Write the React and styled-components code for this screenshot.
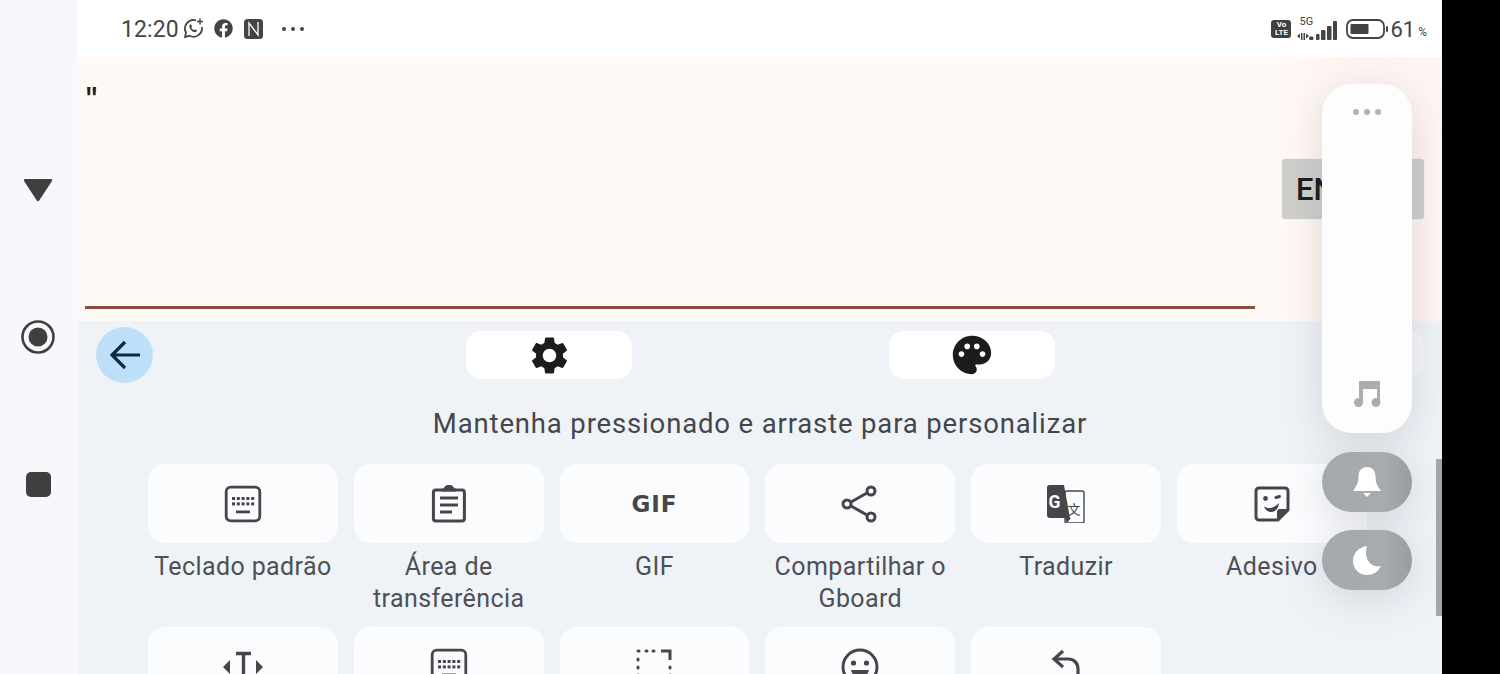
import React from "react";
import styled, { createGlobalStyle } from "styled-components";
import { MdSettings, MdPalette } from "react-icons/md";
import { FaFacebook } from "react-icons/fa";

const Global = createGlobalStyle`
  html, body { margin: 0; padding: 0; background: #000; }
  * { box-sizing: border-box; }
`;

const Screen = styled.div`
  position: relative;
  width: 1500px;
  height: 674px;
  display: grid;
  grid-template-columns: 78px 1364px 58px;
  overflow: hidden;
  font-family: Roboto, "Noto Sans", sans-serif;
  background: #000;
`;

const NavBar = styled.nav`
  background: #f6f8fb;
  display: flex;
  flex-direction: column;
  align-items: center;
  padding: 173px 2px 0 0;
  gap: 113px;
`;
const NavSlot = styled.div`
  width: 34px;
  height: 34px;
  display: flex;
  align-items: center;
  justify-content: center;
`;

const Main = styled.main`
  position: relative;
  display: flex;
  flex-direction: column;
  height: 674px;
  overflow: hidden;
  background: #eff3f8;
`;

const StatusBar = styled.header`
  height: 57px;
  flex: none;
  background: #fff;
  display: flex;
  align-items: center;
  justify-content: space-between;
  padding: 0 15px 0 43px;
  color: #444;
`;
const StatusGroup = styled.div`
  display: flex;
  align-items: center;
`;
const Clock = styled.span`
  font-size: 23px;
  letter-spacing: 0.1px;
  margin: 2px 4px 0 0;
`;
const Percent = styled.span`
  font-size: 22px;
  margin: 1px 0 0 2px;
`;
const PercentSign = styled.span`
  font-size: 12px;
  margin: 6px 0 0 3px;
`;
const VoLte = styled.span`
  width: 20px;
  height: 18px;
  border-radius: 3px;
  background: #404040;
  color: #fff;
  font-size: 8px;
  line-height: 8px;
  font-weight: 700;
  text-align: center;
  padding-top: 1px;
  margin-right: 6px;
`;
const Signal = styled.div`
  position: relative;
  width: 40px;
  height: 24px;
  margin-right: 9px;
`;
const FiveG = styled.span`
  position: absolute;
  left: 2px;
  top: -1px;
  font-size: 11px;
  line-height: 12px;
  color: #444;
`;

const Editor = styled.section`
  height: 264px;
  flex: none;
  display: flex;
  padding: 0 0 12px 7px;
  background: linear-gradient(90deg, #fff9f5 0%, #fff9f5 88%, #fff5f2 94%, #fff5f2 100%);
`;
const EditorField = styled.div`
  width: 1170px;
  flex: none;
  display: flex;
  flex-direction: column;
  justify-content: space-between;
  border-bottom: 3px solid #8a4f42;
`;
const Quote = styled.span`
  font-family: "Liberation Mono", monospace;
  font-weight: 700;
  font-size: 25px;
  line-height: 28px;
  color: #222;
  margin-top: 29px;
  margin-left: -1px;
`;
const EnterButton = styled.button`
  flex: none;
  width: 142px;
  height: 60px;
  margin: 102px 0 0 27px;
  padding: 0 0 0 14px;
  text-align: left;
  border: none;
  border-radius: 3px;
  background: #cfcfcd;
  box-shadow: 0 0 2px rgba(0, 0, 0, 0.1);
  color: #1c1c1c;
  font-family: Roboto, sans-serif;
  font-size: 31px;
  font-weight: 500;
`;

const Keyboard = styled.section`
  position: relative;
  flex: 1;
  min-height: 0;
  overflow: hidden;
  background: #eff3f8;
`;
const Toolbar = styled.div`
  height: 56px;
  margin-top: 6px;
  padding-left: 18px;
  display: flex;
  align-items: center;
`;
const BackButton = styled.div`
  width: 57px;
  height: 56px;
  flex: none;
  border-radius: 50%;
  background: #bde0f8;
  display: flex;
  align-items: center;
  justify-content: center;
  margin-right: 313px;
`;
const ToolPill = styled.div`
  width: ${(p) => p.$w}px;
  height: 48px;
  flex: none;
  margin-right: ${(p) => p.$after || 0}px;
  border-radius: 15px;
  background: ${(p) => p.$bg || "#fff"};
  color: #1c1c1c;
  display: flex;
  align-items: center;
  justify-content: center;
`;
const Hint = styled.h2`
  margin: 25px 0 24px;
  font-size: 27.5px;
  line-height: 32px;
  font-weight: 400;
  letter-spacing: 0.85px;
  text-align: center;
  color: #44474a;
`;
const TileGrid = styled.div`
  display: grid;
  grid-template-columns: repeat(6, 189.8px);
  column-gap: 16px;
  row-gap: 12px;
  padding-left: 70px;
`;
const TileCell = styled.div`
  display: flex;
  flex-direction: column;
  align-items: center;
`;
const Tile = styled.div`
  width: 100%;
  height: 79px;
  border-radius: 17px;
  background: #fbfcfe;
  color: #444649;
  display: flex;
  align-items: center;
  justify-content: center;
`;
const Label = styled.div`
  margin-top: 8px;
  min-height: 64px;
  font-size: 25px;
  line-height: 32px;
  letter-spacing: 0.4px;
  color: #4d5154;
  text-align: center;
  white-space: nowrap;
`;
const GifMark = styled.span`
  font-family: "DejaVu Sans", sans-serif;
  font-weight: 700;
  font-size: 23px;
  letter-spacing: 1px;
  color: #444649;
`;

const Scrollbar = styled.div`
  position: absolute;
  right: 0;
  top: 459px;
  width: 6px;
  height: 157px;
  background: #a5a6a8;
`;

const Dock = styled.aside`
  position: absolute;
  left: 1322px;
  top: 84px;
  width: 90px;
  display: flex;
  flex-direction: column;
  gap: 18px;
  filter: drop-shadow(0 8px 20px rgba(60, 65, 75, 0.17));
`;
const DockPanel = styled.div`
  height: 349px;
  margin-bottom: 1px;
  border-radius: 30px;
  background: #fdfdfd;
  display: flex;
  flex-direction: column;
  align-items: center;
  justify-content: space-between;
  padding: 25px 0 26px;
`;
const Dots = styled.div`
  display: flex;
  gap: ${(p) => p.$gap || 5}px;
`;
const Dot = styled.span`
  width: 6px;
  height: 6px;
  border-radius: 50%;
  background: #b3b3b3;
`;
const StatusDot = styled.span`
  width: 4px;
  height: 4px;
  border-radius: 50%;
  background: #444;
`;
const DockPill = styled.div`
  height: 60px;
  border-radius: 30px;
  background: linear-gradient(90deg, #a5a9ae 0%, #a7abb0 70%, #999da2 100%);
  display: flex;
  align-items: center;
  justify-content: center;
`;

const Sv = styled.svg`
  display: block;
  flex: none;
  margin: ${(p) => p.$m || "0"};
`;

const KeyboardIcon = () => (
  <Sv width="38" height="38" viewBox="0 0 38 38" fill="none">
    <rect x="2.2" y="2.2" width="33.6" height="33.6" rx="4.500" stroke="currentColor" strokeWidth="2.800" />
    <g fill="currentColor">
      {[8, 12.8, 17.6, 22.4, 27.2].map((x) => <rect key={x} x={x} y="12" width="3" height="3" />)}
      {[8, 12.8, 17.6, 22.4, 27.2].map((x) => <rect key={x} x={x} y="17.4" width="3" height="3" />)}
      <rect x="12" y="25.500" width="14" height="2.800" />
    </g>
  </Sv>
);
const ClipboardIcon = () => (
  <Sv width="38" height="38" viewBox="0 0 38 38" fill="none" stroke="currentColor" strokeWidth="3">
    <rect x="3.400" y="5" width="31" height="31" rx="2.500" />
    <path d="M12 5h14M15 5c0-5 8-5 8 0" fill="currentColor" />
    <path d="M10 13h18M10 20h18M10 27h12" />
  </Sv>
);
const ShareIcon = () => (
  <Sv width="38" height="38" viewBox="0 0 38 38" fill="none" stroke="currentColor" strokeWidth="3">
    <circle cx="6" cy="19" r="4" />
    <circle cx="30" cy="6" r="4" />
    <circle cx="30" cy="32" r="4" />
    <path d="M9.600 17.200 26.400 7.800M9.600 20.800l16.800 9.400" />
  </Sv>
);
const TranslateIcon = () => (
  <Sv width="38" height="38" viewBox="0 0 38 38">
    <rect x="18" y="6" width="19" height="32" rx="2" fill="none" stroke="#444649" strokeWidth="1.400" />
    <path d="M2.500 0H17l6 33H3a3 3 0 0 1-3-3V2.500A2.500 2.500 0 0 1 2.500 0z" fill="#444649" />
    <path d="M18 33l2 5 4-5z" fill="#444649" />
    <text x="1.500" y="23" fontFamily="Roboto, sans-serif" fontSize="17.500" fontWeight="700" fill="#fbfcfe">G</text>
    <text x="20.500" y="29" fontFamily="'Noto Sans CJK SC', sans-serif" fontSize="13" fill="#444649">文</text>
  </Sv>
);
const StickerIcon = () => (
  <Sv width="36" height="36" viewBox="0 0 36 36" fill="none">
    <path d="M5 2h26a3 3 0 0 1 3 3v19L24 34H5a3 3 0 0 1-3-3V5a3 3 0 0 1 3-3z" stroke="currentColor" strokeWidth="3" strokeLinejoin="round" />
    <path d="M34 23h-8a3 3 0 0 0-3 3v8z" fill="currentColor" />
    <circle cx="11.500" cy="12.500" r="2.400" fill="currentColor" />
    <path d="M22 11.500l3.500-1" stroke="currentColor" strokeWidth="3" strokeLinecap="round" />
    <path d="M10 20c4 3.500 10 2.500 15-3-.6 6-4 9-8 9-3 0-6-2-7-6z" fill="currentColor" />
  </Sv>
);
const TextWidthIcon = () => (
  <Sv width="42" height="38" viewBox="0 0 42 38" fill="none">
    <path d="M14 5.500h15M21.500 5.500V38" stroke="currentColor" strokeWidth="3.400" />
    <path d="M8 12v14l-7-7zM34 12v14l7-7z" fill="currentColor" />
  </Sv>
);
const SelectIcon = () => (
  <Sv width="36" height="38" viewBox="0 0 36 38" fill="none" stroke="currentColor" strokeWidth="3">
    <path d="M2 3h1M10 3h1M17 3h1M2 11v1M2 19v1M2 27v1M2 35v1M34 19v1M34 27v1M34 35v1" strokeLinecap="round" />
    <path d="M25 3h9v9" />
  </Sv>
);
const FaceIcon = () => (
  <Sv width="38" height="38" viewBox="0 0 38 38" fill="none">
    <circle cx="19" cy="19" r="17" stroke="currentColor" strokeWidth="3" />
    <circle cx="12.500" cy="15" r="2.600" fill="currentColor" />
    <circle cx="25.500" cy="15" r="2.600" fill="currentColor" />
    <path d="M10 22h18c-1 5-5 8-9 8s-8-3-9-8z" fill="currentColor" />
  </Sv>
);
const UndoIcon = () => (
  <Sv width="30" height="38" viewBox="0 0 30 38" fill="none" stroke="currentColor" strokeWidth="3.200">
    <path d="M12 3 3 11l9 8" />
    <path d="M3 11h14c6 0 10 4 10 10v17" />
  </Sv>
);

const tiles = [
  { key: "teclado", label: "Teclado padrão", icon: <KeyboardIcon /> },
  { key: "area", label: <>Área de<br />transferência</>, icon: <ClipboardIcon /> },
  { key: "gif", label: "GIF", icon: <GifMark>GIF</GifMark> },
  { key: "share", label: <>Compartilhar o<br />Gboard</>, icon: <ShareIcon /> },
  { key: "trad", label: "Traduzir", icon: <TranslateIcon /> },
  { key: "ades", label: "Adesivo", icon: <StickerIcon /> },
  { key: "width", icon: <TextWidthIcon /> },
  { key: "kb2", icon: <KeyboardIcon /> },
  { key: "sel", icon: <SelectIcon /> },
  { key: "face", icon: <FaceIcon /> },
  { key: "undo", icon: <UndoIcon /> },
];

export default function App() {
  return (
    <Screen>
      <Global />
      <NavBar>
        <NavSlot>
          <Sv width="30" height="24" viewBox="0 0 30 24"><path d="M2 1h26a1.300 1.300 0 0 1 1 2L16.200 22.500a1.400 1.400 0 0 1-2.400 0L1 3a1.300 1.300 0 0 1 1-2z" fill="#3f3f3f" /></Sv>
        </NavSlot>
        <NavSlot>
          <Sv width="34" height="34" viewBox="0 0 34 34"><circle cx="17" cy="17" r="15.500" fill="none" stroke="#3f3f3f" strokeWidth="2.600" /><circle cx="17" cy="17" r="9.500" fill="#3f3f3f" /></Sv>
        </NavSlot>
        <NavSlot>
          <Sv width="25" height="25" viewBox="0 0 25 25"><rect width="25" height="25" rx="5" fill="#3f3f3f" /></Sv>
        </NavSlot>
      </NavBar>

      <Main>
        <StatusBar>
          <StatusGroup>
            <Clock>12:20</Clock>
            <Sv width="21" height="21" viewBox="0 0 21 21" fill="none" $m="0 10px 0 0">
              <path d="M13 2.300A8.600 8.600 0 0 0 3 14.600L2 19l4.500-1.200A8.600 8.600 0 0 0 18.900 9" stroke="#444" strokeWidth="1.800" />
              <path d="M7 6.500c-1.400 1.500-.6 3.600 1 5.500 1.800 2 4 3 5.600 1.600l.5-1-2.200-1.300-1 .9c-1-.4-2.200-1.600-2.700-2.700l.9-1L8 6.200z" fill="#444" />
              <path d="M17 0.500v6M14 3.500h6" stroke="#444" strokeWidth="1.500" />
            </Sv>
            <FaFacebook size={19} color="#444" style={{ marginRight: 11 }} />
            <Sv width="19" height="20" viewBox="0 0 19 20" $m="0 19px 0 0">
              <rect width="19" height="20" rx="3.500" fill="#444" />
              <path d="M5 17V4l9 12V3" fill="none" stroke="#fff" strokeWidth="1.300" />
            </Sv>
            <Dots $gap={5}>
              <StatusDot /><StatusDot /><StatusDot />
            </Dots>
          </StatusGroup>
          <StatusGroup>
            <VoLte>Vo<br />LTE</VoLte>
            <Signal>
              <FiveG>5G</FiveG>
              <Sv width="40" height="24" viewBox="0 0 40 24" fill="#444">
                <path d="M0 19l3-2.500v5zM4 16h1.500v7H4zM6.500 16H8v7H6.500zM9 16.500l3 2.500-3 2.500z" />
                <rect x="12" y="19.500" width="4.500" height="3.500" rx="1.500" />
                <rect x="19" y="17" width="3.500" height="6" rx="1" />
                <rect x="24" y="13" width="4.500" height="10" rx="1" />
                <rect x="30" y="9" width="4.500" height="14" rx="1" />
                <rect x="36" y="4" width="4" height="19" rx="1" />
              </Sv>
            </Signal>
            <Sv width="42" height="20" viewBox="0 0 42 20" fill="none">
              <rect x="1" y="1" width="37" height="18" rx="6" stroke="#444" strokeWidth="1.800" />
              <rect x="4.500" y="5" width="18" height="10" rx="1" fill="#444" />
              <rect x="40" y="7" width="2" height="6" rx="1" fill="#444" />
            </Sv>
            <Percent>61</Percent>
            <PercentSign>%</PercentSign>
          </StatusGroup>
        </StatusBar>

        <Editor>
          <EditorField>
            <Quote>"</Quote>
          </EditorField>
          <EnterButton>ENTER</EnterButton>
        </Editor>

        <Keyboard>
          <Toolbar>
            <BackButton>
              <Sv width="32" height="30" viewBox="0 0 32 30" fill="none" stroke="#0b2a45" strokeWidth="3.200">
                <path d="M16 2 3 15l13 13M3 15h28" />
              </Sv>
            </BackButton>
            <ToolPill $w={166} $after={257}><MdSettings size={45} /></ToolPill>
            <ToolPill $w={166} $after={269}><MdPalette size={46} /></ToolPill>
            <ToolPill $w={100} $bg="#f6f8fb" />
          </Toolbar>
          <Hint>Mantenha pressionado e arraste para personalizar</Hint>
          <TileGrid>
            {tiles.map((t) => (
              <TileCell key={t.key}>
                <Tile>{t.icon}</Tile>
                {t.label && <Label>{t.label}</Label>}
              </TileCell>
            ))}
          </TileGrid>
        </Keyboard>
        <Scrollbar />
      </Main>
      <div />

      <Dock>
        <DockPanel>
          <Dots>
            <Dot /><Dot /><Dot />
          </Dots>
          <Sv width="28" height="27" viewBox="0 0 28 27">
            <path d="M6 1h21v21h-3V9H10v14H6z" fill="#adadad" />
            <circle cx="5.500" cy="22.500" r="4.500" fill="#adadad" />
            <circle cx="23" cy="22.500" r="4.500" fill="#adadad" />
          </Sv>
        </DockPanel>
        <DockPill>
          <Sv width="28" height="31" viewBox="0 0 28 31" fill="#fff">
            <path d="M14 0c5.500 0 8.500 4 8.500 9.500 0 6 1.500 9 5.500 14.500H0c4-5.500 5.500-8.500 5.500-14.500C5.500 4 8.500 0 14 0z" />
            <path d="M10 26h8l-4 4z" />
          </Sv>
        </DockPill>
        <DockPill>
          <Sv width="28" height="29" viewBox="0 0 28 29" fill="#fff">
            <path d="M14 0C6 1 0 7 0 15c0 8 6.500 14 14 14 6 0 11-3 14-9-9 2.500-18-6.500-14-20z" />
          </Sv>
        </DockPill>
      </Dock>
    </Screen>
  );
}
